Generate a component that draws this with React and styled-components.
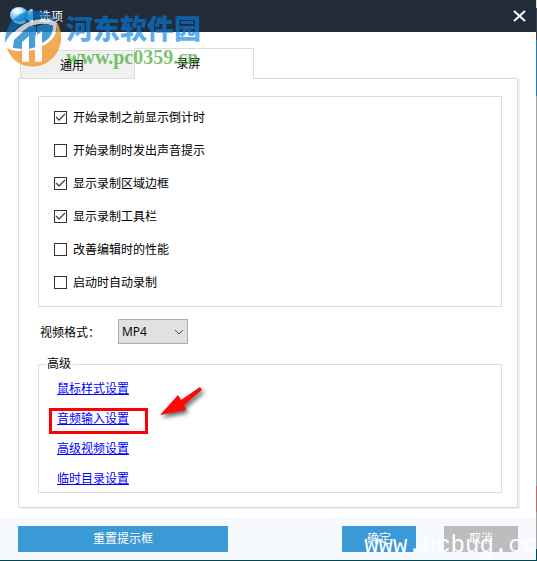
import React, { useState } from "react";
import styled, { createGlobalStyle, css } from "styled-components";

const GlobalStyle = createGlobalStyle`
  * {
    box-sizing: border-box;
  }

  body {
    margin: 0;
    background: #fff;
    color: #000;
    font-family: "Liberation Sans", "Noto Sans CJK SC", sans-serif;
    font-size: 12px;
  }

  button, select, input {
    font: inherit;
  }
`;

const Desktop = styled.div`
  display: grid;
  grid-template-columns: 1fr 1px;
  min-height: 100vh;
  position: relative;
  overflow: hidden;
`;

const Backdrop = styled.div`
  background: linear-gradient(
    #d8d8d8 0 8px,
    #39424c 8px 40px,
    #1f7fae 40px 96px,
    #a3a3a3 96px 486px,
    #b96a6c 486px 512px,
    #a3a3a3 512px 549px,
    #004653 549px
  );
`;

const Window = styled.div`
  display: flex;
  flex-direction: column;
  border-bottom: 1px solid #004653;
`;

const TitleBar = styled.header`
  display: flex;
  align-items: center;
  height: 32px;
  padding: 0 10px;
  background: #232d39;
  color: #fff;
`;

const Title = styled.h1`
  flex: 1;
  margin: 0 0 0 6px;
  padding-bottom: 2px;
  font-size: 12px;
  font-weight: 400;
`;

const CloseButton = styled.button`
  display: flex;
  padding: 0;
  border: none;
  background: none;
  color: #fff;
  cursor: pointer;
`;

const Main = styled.main`
  flex: 1;
  display: flex;
  flex-direction: column;
  padding: 16px 18px 10px;
`;

const TabList = styled.div`
  display: flex;
  align-items: flex-end;
  padding-left: 2px;
`;

const Tab = styled.button`
  height: 28px;
  width: 114px;
  padding: 0 11px 0 0;
  border: 1px solid #dcdcdc;
  border-width: 1px 0 0 1px;
  background: #f0f0f0;
  color: #000;
  cursor: pointer;

  ${({ $active }) =>
    $active &&
    css`
      height: 31px;
      width: 120px;
      margin-bottom: -1px;
      padding-bottom: 3px;
      border-width: 1px 1px 0;
      background: #fff;
      z-index: 1;
    `}
`;

const Panel = styled.section`
  flex: 1;
  padding: 17px 15px 14px 19px;
  border: 1px solid #dcdcdc;
  box-shadow: 2px 1px 0 #f0f0f0;
`;

const CheckGroup = styled.div`
  display: flex;
  flex-direction: column;
  align-items: flex-start;
  gap: 15px;
  padding: 12px 15px 14px;
  border: 1px solid #dcdcdc;
`;

const CheckLabel = styled.label`
  display: flex;
  align-items: flex-start;
  gap: 6px;
  line-height: 18px;
`;

const CheckBox = styled.span`
  display: grid;
  padding-top: 2px;

  > * {
    grid-area: 1 / 1;
  }

  input {
    appearance: none;
    width: 13px;
    height: 13px;
    margin: 0;
    border: 1px solid #333;
    background: #fff;
  }

  svg {
    display: none;
    pointer-events: none;
  }

  input:checked + svg {
    display: block;
  }
`;

const FormatRow = styled.div`
  display: flex;
  align-items: center;
  margin: 12px 0;
  padding-left: 2px;

  label {
    width: 78px;
  }
`;

const SelectBox = styled.div`
  display: grid;
  align-items: center;

  > * {
    grid-area: 1 / 1;
  }

  select {
    appearance: none;
    width: 70px;
    height: 25px;
    padding: 0 3px;
    border: 1px solid #adadad;
    border-radius: 0;
    background: #e1e1e1;
    color: #000;
    font-family: "Open Sans", sans-serif;
    font-size: 12px;
  }

  svg {
    justify-self: end;
    margin-right: 4px;
    pointer-events: none;
  }
`;

const Advanced = styled.fieldset`
  margin: 0;
  padding: 6px 18px 3px;
  border: 1px solid #dcdcdc;

  legend {
    margin-left: -11px;
    padding: 0 2px 0 1px;
    line-height: 17px;
  }

  ul {
    display: flex;
    flex-direction: column;
    align-items: flex-start;
    gap: 10px;
    margin: 0;
    padding: 0;
    list-style: none;
  }

  li {
    position: relative;
    line-height: 20px;
  }

  a {
    color: #00f;
    text-decoration: underline;
  }
`;

const Highlight = styled.span`
  position: absolute;
  top: -1px;
  left: -8px;
  width: 99px;
  height: 26px;
  border: 3px solid #fb0007;
  pointer-events: none;
`;

const Arrow = styled.svg`
  position: absolute;
  top: -26px;
  left: 100px;
  filter: drop-shadow(2px 3px 2px rgba(0, 0, 0, 0.6));
  pointer-events: none;
`;

const Footer = styled.footer`
  display: flex;
  gap: 28px;
  padding: 8px 18px;
  background: #f6faff;
`;

const ActionButton = styled.button`
  width: ${({ $wide }) => ($wide ? "210px" : "74px")};
  height: 26px;
  margin-right: ${({ $wide }) => ($wide ? "auto" : "0")};
  padding: 0 0 3px;
  border: none;
  background: ${({ $muted }) => ($muted ? "#bdbdbd" : "#3a9ad5")};
  color: #fff;
  cursor: pointer;
`;

const Watermark = styled.div`
  position: absolute;
  top: 8px;
  left: 5px;
  display: flex;
  gap: 4px;
  pointer-events: none;
  z-index: 2;
`;

const WatermarkText = styled.div`
  display: flex;
  flex-direction: column;
  font-weight: 700;
  white-space: nowrap;
`;

const SiteName = styled.span`
  margin-top: 3px;
  color: rgba(0, 128, 232, 0.65);
  font-family: "Noto Sans CJK SC", sans-serif;
  font-size: 27px;
  font-weight: 900;
  line-height: 34px;
`;

const SiteUrl = styled.span`
  color: rgba(44, 160, 20, 0.65);
  font-family: "Liberation Serif", serif;
  font-size: 20px;
  line-height: 24px;
`;

const CornerMark = styled.div`
  position: absolute;
  right: 0;
  bottom: 0;
  color: #fff;
  font-family: "Liberation Mono", monospace;
  font-size: 24px;
  line-height: 30px;
  white-space: nowrap;
  pointer-events: none;
`;

const CameraIcon = () => (
  <svg width="23" height="20" viewBox="0 0 23 20" aria-hidden="true">
    <defs>
      <radialGradient id="camera" cx="0.35" cy="0.25" r="0.8">
        <stop offset="0" stopColor="#f2fbff" />
        <stop offset="0.45" stopColor="#8ad2fa" />
        <stop offset="1" stopColor="#1a82d8" />
      </radialGradient>
    </defs>
    <path d="M15 7L21 3Q23 2 23 5V15Q23 18 21 16L15 12Z" fill="#8ad4fa" />
    <path d="M16 8L22 4V8L16 11Z" fill="#e0f6ff" />
    <ellipse cx="9" cy="9" rx="9" ry="8" fill="url(#camera)" />
    <path d="M3 15Q9 21 16 16L14 14Q9 17 5 14Z" fill="#fff" />
    <ellipse cx="8" cy="5" rx="5" ry="3" fill="#fff" opacity="0.6" />
  </svg>
);

const SiteLogo = () => (
  <svg width="57" height="60" viewBox="5 8 57 60" aria-hidden="true">
    {/* upper blue crescent */}
    <path
      d="M5 43C5 24 17 11 34 11C44 11 52 15 57 21C45 16 34 18 25 23C16 28 9 35 5 43Z"
      fill="#0078cc"
      opacity="0.65"
    />
    {/* lower orange crescent */}
    <path
      d="M7 48C12 51 17 51 22 51V60H29V51L35 50V60H42V46C54 41 58 31 57 22C66 38 60 58 42 65C26 70 11 62 7 48Z"
      fill="#f19b38"
      opacity="0.85"
    />
    {/* white swoosh between the crescents and the towers */}
    <path
      d="M6 45C12 31 26 19 43 19C50 19 55 21 57 23C57 34 52 41 42 46V42C50 38 53 31 53 26C37 19 20 29 12 45Z"
      fill="#fff"
      opacity="0.75"
    />
    {/* towers */}
    <path d="M14 40L29 26H36V47L29 49V36L22 43V49L13 48Z" fill="#1a86d0" opacity="0.8" />
    <path d="M37 26L45 24L53 26C53 34 50 39 42 43V32L37 36Z" fill="#1a86d0" opacity="0.8" />
    <path d="M22 42L29 36V62H22ZM35 36L42 31V62H35Z" fill="#fff" opacity="0.8" />
  </svg>
);

const options = [
  { label: "开始录制之前显示倒计时", checked: true },
  { label: "开始录制时发出声音提示", checked: false },
  { label: "显示录制区域边框", checked: true },
  { label: "显示录制工具栏", checked: true },
  { label: "改善编辑时的性能", checked: false },
  { label: "启动时自动录制", checked: false },
];

const links = ["鼠标样式设置", "音频输入设置", "高级视频设置", "临时目录设置"];

const App = () => {
  const [tab, setTab] = useState("录屏");

  return (
    <Desktop>
      <GlobalStyle />
      <Window>
        <TitleBar>
          <CameraIcon />
          <Title>选项</Title>
          <CloseButton aria-label="关闭">
            <svg width="13" height="12" viewBox="0 0 13 12">
              <path d="M1 1L12 11M12 1L1 11" stroke="currentColor" strokeWidth="2" />
            </svg>
          </CloseButton>
        </TitleBar>

        <Main>
          <TabList role="tablist">
            {["通用", "录屏"].map((name) => (
              <Tab
                key={name}
                role="tab"
                aria-selected={tab === name}
                $active={tab === name}
                onClick={() => setTab(name)}
              >
                {name}
              </Tab>
            ))}
          </TabList>

          <Panel>
            <CheckGroup>
              {options.map(({ label, checked }) => (
                <CheckLabel key={label}>
                  <CheckBox>
                    <input type="checkbox" defaultChecked={checked} />
                    <svg width="13" height="13" viewBox="0 0 13 13">
                      <path d="M2 6L5 9L11 3" fill="none" stroke="#444" strokeWidth="1.3" />
                    </svg>
                  </CheckBox>
                  {label}
                </CheckLabel>
              ))}
            </CheckGroup>

            <FormatRow>
              <label htmlFor="format">视频格式：</label>
              <SelectBox>
                <select id="format" defaultValue="MP4">
                  <option>MP4</option>
                </select>
                <svg width="10" height="6" viewBox="0 0 10 6">
                  <path d="M1 1L5 5L9 1" fill="none" stroke="#555" />
                </svg>
              </SelectBox>
            </FormatRow>

            <Advanced>
              <legend>高级</legend>
              <ul>
                {links.map((name) => (
                  <li key={name}>
                    <a href="#">{name}</a>
                    {name === "音频输入设置" && (
                      <>
                        <Highlight />
                        <Arrow width="50" height="38" viewBox="0 0 50 38">
                          <path d="M3 32L21 12L24 17L43 4L45 7L27 22L29 27Z" fill="#fa0a06" />
                        </Arrow>
                      </>
                    )}
                  </li>
                ))}
              </ul>
            </Advanced>
          </Panel>
        </Main>

        <Footer>
          <ActionButton $wide>重置提示框</ActionButton>
          <ActionButton>确定</ActionButton>
          <ActionButton $muted>取消</ActionButton>
        </Footer>
      </Window>
      <Backdrop />

      <Watermark>
        <SiteLogo />
        <WatermarkText>
          <SiteName>河东软件园</SiteName>
          <SiteUrl>www.pc0359.cn</SiteUrl>
        </WatermarkText>
      </Watermark>
      <CornerMark>www.ucbug.cc</CornerMark>
    </Desktop>
  );
};

export default App;
